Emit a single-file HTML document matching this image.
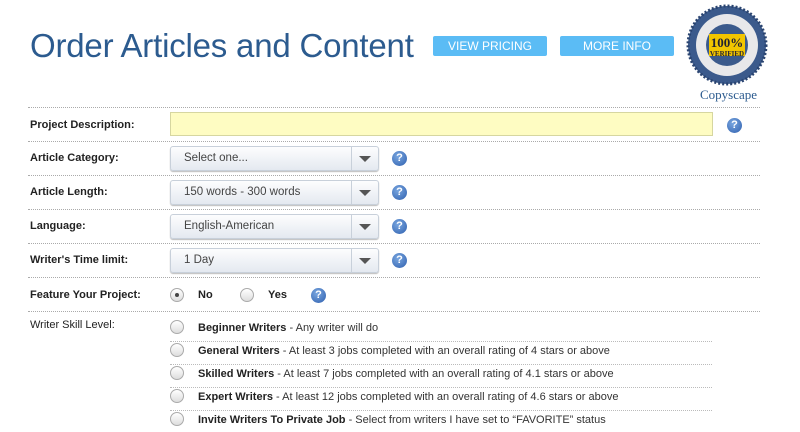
<!DOCTYPE html>
<html><head><style>
body{margin:0;width:800px;height:432px;background:#fff;font-family:"Liberation Sans",sans-serif;position:relative;overflow:hidden;color:#222}
.a{position:absolute}
.title{left:30px;top:27px;font-size:33px;color:#2c5b8f;letter-spacing:-0.2px}
.btn{top:36px;height:20px;width:114px;background:#5bbcf5;color:#fff;font-size:12px;text-align:center;line-height:20px;border-radius:2px}
.hr{left:28px;width:732px;border-top:1px dotted #aaa;height:0}
.lbl{left:30px;font-size:11px;font-weight:bold;color:#222}
.sel{left:170px;width:207px;height:23px;border:1px solid #c8d0da;border-radius:3px;background:linear-gradient(#fdfdfe,#e4e9f0);box-shadow:0 1px 1px #bbb}
.sel span{position:absolute;left:13px;top:5px;font-size:11.5px;color:#444}
.sel i{position:absolute;right:0;top:0;width:26px;height:23px;border-left:1px solid #c8d0da}
.sel i:after{content:"";position:absolute;left:7px;top:9px;border-left:6px solid transparent;border-right:6px solid transparent;border-top:6px solid #555}
.q{width:15px;height:15px;border-radius:50%;background:radial-gradient(circle at 40% 35%,#7aa7e0,#2e5fae);color:#fff;font-size:11px;font-weight:bold;text-align:center;line-height:15px}
.r{width:12px;height:12px;border-radius:50%;border:1px solid #aaa;background:linear-gradient(#fff,#ddd)}
.sk{left:198px;font-size:11px;color:#333}
.sk b{color:#222}
.sl{left:170px;width:542px;border-top:1px dotted #bbb}
</style></head><body>
<div class="a title">Order Articles and Content</div>
<div class="a btn" style="left:433px">VIEW PRICING</div>
<div class="a btn" style="left:560px">MORE INFO</div>
<svg class="a" style="left:686px;top:4px" width="82" height="84" viewBox="0 0 82 84">
<circle cx="41" cy="41" r="39" fill="#3b5a8c" stroke="#2a4470" stroke-width="3" stroke-dasharray="2 2"/>
<circle cx="41" cy="41" r="31" fill="#e8e8ea"/>
<circle cx="41" cy="41" r="21" fill="#3b5a8c"/>
<rect x="23" y="30" width="36" height="22" fill="#f2c500"/>
<text x="41" y="43" text-anchor="middle" font-family="Liberation Serif" font-weight="bold" font-size="13" fill="#223">100%</text>
<text x="41" y="52" text-anchor="middle" font-family="Liberation Serif" font-weight="bold" font-size="7" fill="#223">VERIFIED</text>
</svg>
<div class="a" style="left:700px;top:87px;font-family:'Liberation Serif';font-size:13px;color:#2c5b8f">Copyscape</div>

<div class="a hr" style="top:107px"></div>
<div class="a lbl" style="top:119px">Project Description:</div>
<div class="a" style="left:170px;top:112px;width:541px;height:22px;background:#fefcc2;border:1px solid #d6d6a0"></div>
<div class="a q" style="left:727px;top:118px">?</div>
<div class="a hr" style="top:141px"></div>

<div class="a lbl" style="top:152px">Article Category:</div>
<div class="a sel" style="top:146px"><span>Select one...</span><i></i></div>
<div class="a q" style="left:392px;top:151px">?</div>
<div class="a hr" style="top:175px"></div>
<div class="a lbl" style="top:186px">Article Length:</div>
<div class="a sel" style="top:180px"><span>150 words - 300 words</span><i></i></div>
<div class="a q" style="left:392px;top:185px">?</div>
<div class="a hr" style="top:209px"></div>
<div class="a lbl" style="top:220px">Language:</div>
<div class="a sel" style="top:214px"><span>English-American</span><i></i></div>
<div class="a q" style="left:392px;top:219px">?</div>
<div class="a hr" style="top:243px"></div>
<div class="a lbl" style="top:254px">Writer's Time limit:</div>
<div class="a sel" style="top:248px"><span>1 Day</span><i></i></div>
<div class="a q" style="left:392px;top:253px">?</div>
<div class="a hr" style="top:277px"></div>

<div class="a lbl" style="top:289px">Feature Your Project:</div>
<div class="a r" style="left:170px;top:288px"><div style="width:4px;height:4px;border-radius:50%;background:#444;margin:4px"></div></div>
<div class="a lbl" style="left:198px;top:289px">No</div>
<div class="a r" style="left:240px;top:288px"></div>
<div class="a lbl" style="left:268px;top:289px">Yes</div>
<div class="a q" style="left:311px;top:288px">?</div>
<div class="a hr" style="top:311px"></div>

<div class="a lbl" style="top:319px;font-weight:normal">Writer Skill Level:</div>
<div class="a r" style="left:170px;top:320px"></div>
<div class="a sk" style="top:322px"><b>Beginner Writers</b> - Any writer will do</div>
<div class="a sl" style="top:341px"></div>
<div class="a r" style="left:170px;top:343px"></div>
<div class="a sk" style="top:345px"><b>General Writers</b> - At least 3 jobs completed with an overall rating of 4 stars or above</div>
<div class="a sl" style="top:364px"></div>
<div class="a r" style="left:170px;top:366px"></div>
<div class="a sk" style="top:368px"><b>Skilled Writers</b> - At least 7 jobs completed with an overall rating of 4.1 stars or above</div>
<div class="a sl" style="top:387px"></div>
<div class="a r" style="left:170px;top:389px"></div>
<div class="a sk" style="top:391px"><b>Expert Writers</b> - At least 12 jobs completed with an overall rating of 4.6 stars or above</div>
<div class="a sl" style="top:410px"></div>
<div class="a r" style="left:170px;top:412px"></div>
<div class="a sk" style="top:414px"><b>Invite Writers To Private Job</b> - Select from writers I have set to “FAVORITE” status</div>
</body></html>
